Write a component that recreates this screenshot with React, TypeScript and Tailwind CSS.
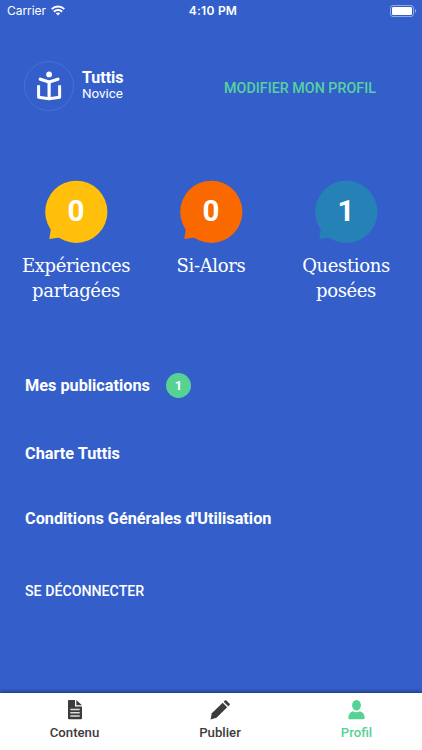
import React from 'react';

interface Stat {
  count: number;
  lines: string[];
  color: string;
}

const stats: Stat[] = [
  { count: 0, lines: ['Expériences', 'partagées'], color: '#ffbf0b' },
  { count: 0, lines: ['Si-Alors'], color: '#fa6800' },
  { count: 1, lines: ['Questions', 'posées'], color: '#2681b6' },
];

const StatusBar = () => (
  <div className="h-[22px] grid grid-cols-3 items-center pl-[7px] pr-[5px] leading-none font-['Inter',sans-serif]">
    <div className="flex items-center gap-[5px]">
      <span className="text-[12px] tracking-[-0.05px]">Carrier</span>
      <svg className="mb-px" width="14" height="11" viewBox="0 0 14 11" fill="none" stroke="white" strokeWidth="2">
        <path d="M.7 4.1C4.2.7 9.8.7 13.3 4.1" />
        <path d="M2.9 6.7c2.2-2.2 6-2.2 8.2 0" />
        <path d="M7 10.5 4.8 8.3c1.2-1.2 3.2-1.2 4.4 0Z" fill="white" stroke="none" />
      </svg>
    </div>
    <span className="pl-[2px] text-center font-semibold text-[12px] tracking-[0.25px]">4:10 PM</span>
    <svg className="justify-self-end mb-px" width="27" height="12" viewBox="0 0 27 12">
      <rect x=".5" y=".5" width="23" height="11" rx="2.5" fill="none" stroke="white" strokeOpacity=".45" />
      <rect x="2" y="2" width="20" height="8" rx="1.2" fill="white" />
      <path d="M25 4c1.6.6 1.6 3.4 0 4Z" fill="white" fillOpacity=".5" />
    </svg>
  </div>
);

const Logo = () => (
  <svg width="50" height="50" viewBox="0 0 50 50" fill="none" stroke="white" strokeWidth="3" strokeLinejoin="round">
    <circle cx="25" cy="25" r="24.5" stroke="#4a70d2" strokeWidth="1" />
    <circle cx="25.1" cy="13.4" r="2.9" fill="white" stroke="none" />
    <path d="M16.3 18.2 25.1 21l8.8-2.8" strokeLinecap="round" strokeWidth="3.3" />
    <path d="M25.1 20.5V37" strokeWidth="3.2" />
    <path d="M14.6 24.3v12l10.5 1.5 10.5-1.5v-12" />
  </svg>
);

const Bubble = ({ count, color }: { count: number; color: string }) => (
  <div className="relative w-[63px] h-[63px] flex items-center justify-center">
    <svg className="absolute inset-0" width="63" height="63" viewBox="0 0 63 63" fill={color}>
      <circle cx="31.3" cy="31.8" r="31.1" />
      <path d="M6 48 4.3 59 18 57Z" />
    </svg>
    <span className="relative text-[29.5px] font-bold leading-none">{count}</span>
  </div>
);

const App: React.FC = () => {
  return (
    <div className="w-[422px] h-[750px] flex flex-col bg-[#345fcb] text-white font-['Roboto',sans-serif] overflow-hidden">
      <StatusBar />

      {/* Header */}
      <header className="mt-[39px] h-[50px] pl-6 pr-[46px] flex items-center">
        <Logo />
        <div className="ml-2 pb-[1.5px]">
          <p className="text-[16px] font-bold leading-[16px]">Tuttis</p>
          <p className="text-[13.4px] leading-[15px]">Novice</p>
        </div>
        <button className="ml-auto mt-[5px] text-[14.3px] font-medium text-[#56d2a0]">MODIFIER MON PROFIL</button>
      </header>

      {/* Stats */}
      <section className="mt-[69px] h-[150px] px-2 grid grid-cols-[136px_134px_136px]">
        {stats.map((stat) => (
          <div key={stat.lines[0]} className="flex flex-col items-center">
            <Bubble count={stat.count} color={stat.color} />
            <div className="mt-[10px] text-center text-[18px] leading-[25px] tracking-[-0.35px] font-['Roboto_Slab','DejaVu_Serif',serif]">
              {stat.lines.map((line) => (
                <p key={line}>{line}</p>
              ))}
            </div>
          </div>
        ))}
      </section>

      {/* Links */}
      <nav className="flex-1 mt-[43px] px-[25px] flex flex-col items-start text-[16.25px] font-bold">
        <button className="h-[25px] flex items-center">
          <span className="pt-[2px]">Mes publications</span>
          <span className="ml-4 size-[25px] rounded-full bg-[#56d294] flex items-center justify-center text-[13px]">1</span>
        </button>
        <button className="mt-[43px] h-6 pt-px">Charte Tuttis</button>
        <button className="mt-[41px] h-6 pt-px">Conditions Générales d'Utilisation</button>
        <button className="mt-[49px] h-6 pt-px text-[14.2px] font-medium">SE DÉCONNECTER</button>
      </nav>

      {/* Tab bar */}
      <footer className="h-[57px] bg-white grid grid-cols-[149px_142px_131px] text-[13.2px] font-medium leading-[20px] text-[#3c3c3c] shadow-[0_-1px_4px_rgba(0,0,0,0.5)]">
        <div className="flex flex-col items-center pt-[7px]">
          <svg width="14" height="20" viewBox="0 0 14 20" fill="currentColor">
            <path d="M1 0h6v6.5h7v11.8q0 1-1 1H1q-1 0-1-1V1q0-1 1-1Z" />
            <path d="M8.3 0 14 5.3H8.3Z" />
            <path d="M2.3 9.5h9.4M2.3 12.7h9.4M2.3 16h9.4" stroke="#ddd" strokeWidth="1.5" />
          </svg>
          <span className="mt-[3px]">Contenu</span>
        </div>
        <div className="flex flex-col items-center pt-[7px]">
          <svg width="20" height="20" viewBox="0 0 20 20" fill="currentColor">
            <path d="M.5 19.5 1.8 13.3 12.7 2.8l4.5 4.5L6.5 17.8Z" />
            <path d="m13.7 1.8 1.1-1.2q.8-.8 1.6 0l3 3q.8.8 0 1.6l-1.2 1.1Z" />
          </svg>
          <span className="mt-[3px]">Publier</span>
        </div>
        <div className="flex flex-col items-center pt-[7px] text-[#56d294]">
          <svg width="17" height="20" viewBox="0 0 17 20" fill="currentColor">
            <ellipse cx="8.5" cy="5.2" rx="4.4" ry="5.2" />
            <path d="M5 11.2q3.5 2.2 7 0 4.7 1.5 4.7 6.8 0 1.2-1.5 1.2H1.8Q.3 19.2.3 18q0-5.3 4.7-6.8Z" />
          </svg>
          <span className="mt-[3px]">Profil</span>
        </div>
      </footer>
    </div>
  );
};

export default App;
